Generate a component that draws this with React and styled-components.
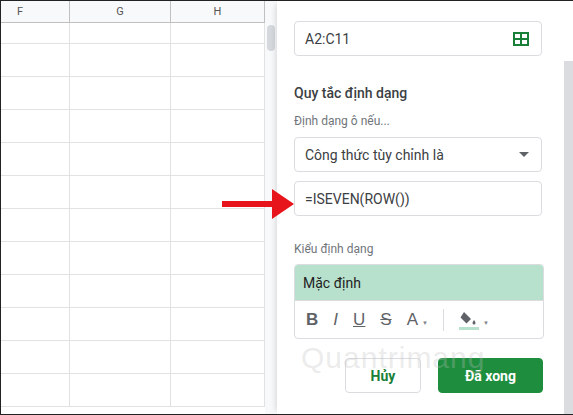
import React from 'react';
import styled, { createGlobalStyle } from 'styled-components';

const Global = createGlobalStyle`
  body { margin: 0; font-family: Roboto, "Liberation Sans", sans-serif; }
`;

const Frame = styled.div`
  width: 573px;
  height: 415px;
  box-sizing: border-box;
  border: 1px solid #222;
  border-right: none;
  display: flex;
  position: relative;
  overflow: hidden;
  background: #fff;
`;

const Sheet = styled.div`
  width: 264px;
  flex: none;
  display: flex;
  flex-direction: column;
`;

const Row = styled.div`
  display: grid;
  grid-template-columns: 69px 101px 94px;
  height: ${p => p.h}px;
  flex: none;
  background: ${p => (p.head ? '#f8f9fa' : '#fff')};
  border-bottom: 1px solid ${p => (p.head ? '#c0c0c0' : '#e2e2e2')};
  box-sizing: border-box;
`;

const Cell = styled.div`
  border-right: 1px solid ${p => (p.head ? '#c0c0c0' : '#e2e2e2')};
  font-size: 11px;
  color: #555;
  display: flex;
  align-items: center;
  justify-content: ${p => (p.left ? 'flex-start' : 'center')};
  padding-left: ${p => (p.left ? '16px' : '0')};
`;

const VScroll = styled.div`
  width: 12px;
  flex: none;
  background: #f8f9fa;
  padding: 24px 2px 0;
  box-sizing: border-box;
`;

const Thumb = styled.div`
  height: 26px;
  border-radius: 5px;
  background: #d5d8dc;
`;

const Panel = styled.div`
  flex: 1;
  padding: 20px 0 0 17px;
  display: flex;
  flex-direction: column;
  box-shadow: -4px 0 6px -3px rgba(0,0,0,0.15);
  position: relative;
`;

const PanelScroll = styled.div`
  position: absolute;
  right: 0;
  top: 60px;
  bottom: 0;
  width: 9px;
  background: #dadce0;
`;

const Field = styled.div`
  width: 248px;
  height: 35px;
  box-sizing: border-box;
  border: 1px solid #dadce0;
  border-radius: 4px;
  display: flex;
  align-items: center;
  justify-content: space-between;
  padding: 0 12px 0 10px;
  font-size: 14px;
  color: #3c4043;
  margin-bottom: ${p => p.mb || 0}px;
`;

const Title = styled.div`
  font-size: 14px;
  font-weight: 500;
  color: #3c4043;
  margin: 29px 0 13px;
`;

const Label = styled.div`
  font-size: 12px;
  color: #70757a;
  margin-top: ${p => p.mt || 0}px;
  margin-bottom: ${p => p.mb}px;
`;

const StyleBox = styled.div`
  width: 248px;
  border: 1px solid #dadce0;
  border-radius: 4px;
  overflow: hidden;
`;

const Preview = styled.div`
  height: 35px;
  background: #b7e1cd;
  display: flex;
  align-items: center;
  padding-left: 8px;
  font-size: 14px;
  color: #222;
  border-bottom: 1px solid #dadce0;
`;

const Tools = styled.div`
  height: 37px;
  display: flex;
  align-items: center;
  padding-left: 11px;
  gap: 15px;
  color: #5f6368;
  font-size: 17px;
`;

const Tool = styled.span`
  font-weight: ${p => (p.b ? 700 : 500)};
  font-style: ${p => (p.i ? 'italic' : 'normal')};
  text-decoration: ${p => p.deco || 'none'};
  font-family: "Liberation Sans", sans-serif;
  display: flex;
  align-items: center;
  gap: 4px;
`;

const Caret = styled.span`
  font-size: 6px;
  color: #80868b;
  margin-top: 6px;
`;

const Sep = styled.div`
  width: 1px;
  height: 22px;
  background: #dadce0;
`;

const Buttons = styled.div`
  display: flex;
  gap: 17px;
  margin: 19px 0 0 51px;
`;

const Btn = styled.div`
  width: ${p => p.w}px;
  height: 35px;
  box-sizing: border-box;
  border-radius: 4px;
  display: flex;
  align-items: center;
  justify-content: center;
  font-size: 14px;
  font-weight: 700;
  color: ${p => (p.primary ? '#fff' : '#188038')};
  background: ${p => (p.primary ? '#1e8e3e' : '#fff')};
  border: 1px solid ${p => (p.primary ? '#1e8e3e' : '#dadce0')};
`;

const Arrow = styled.svg`
  position: absolute;
  left: 221px;
  top: 186px;
`;

const Watermark = styled.div`
  position: absolute;
  left: 300px;
  top: 340px;
  font-size: 30px;
  color: rgba(190,190,190,0.3);
  font-family: "Liberation Sans", sans-serif;
  letter-spacing: 1px;
  pointer-events: none;
`;

const rows = [21, 33, 33, 33, 33, 33, 33, 33, 33, 33, 33, 33];

export default function App() {
  return (
    <>
      <Global />
      <Frame>
        <Sheet>
          <Row head h={22}>
            <Cell head left>F</Cell>
            <Cell head>G</Cell>
            <Cell head>H</Cell>
          </Row>
          {rows.map((h, i) => (
            <Row key={i} h={h}>
              <Cell /><Cell /><Cell />
            </Row>
          ))}
        </Sheet>
        <VScroll><Thumb /></VScroll>
        <Panel>
          <Field>
            A2:C11
            <svg width="16" height="14" viewBox="0 0 16 14">
              <rect x="1" y="1" width="14" height="12" fill="none" stroke="#188038" strokeWidth="2" />
              <path d="M8 1v12M1 7h14" stroke="#188038" strokeWidth="2" />
            </svg>
          </Field>
          <Title>Quy tắc định dạng</Title>
          <Label mb={9}>Định dạng ô nếu...</Label>
          <Field mb={9}>
            Công thức tùy chỉnh là
            <svg width="10" height="5" viewBox="0 0 10 5"><path d="M0 0h10L5 5z" fill="#5f6368" /></svg>
          </Field>
          <Field>=ISEVEN(ROW())</Field>
          <Label mt={26} mb={8}>Kiểu định dạng</Label>
          <StyleBox>
            <Preview>Mặc định</Preview>
            <Tools>
              <Tool b>B</Tool>
              <Tool i>I</Tool>
              <Tool deco="underline">U</Tool>
              <Tool deco="line-through">S</Tool>
              <Tool>A<Caret>▼</Caret></Tool>
              <Sep />
              <Tool>
                <svg width="20" height="20" viewBox="0 0 20 20">
                  <path d="M5 2l7 7-4.5 4.5-6-6z" fill="#5f6368" />
                  <path d="M15 10c1 1.5 1.5 2.3 1.5 3a1.5 1.5 0 0 1-3 0c0-.7.5-1.5 1.5-3z" fill="#5f6368" />
                  <rect x="0" y="17" width="20" height="3" fill="#b7e1cd" />
                </svg>
                <Caret>▼</Caret>
              </Tool>
            </Tools>
          </StyleBox>
          <Buttons>
            <Btn w={76}>Hủy</Btn>
            <Btn w={105} primary>Đã xong</Btn>
          </Buttons>
          <PanelScroll />
        </Panel>
        <Watermark>Quantrimang</Watermark>
        <Arrow width="72" height="34" viewBox="0 0 72 34">
          <path d="M0 14h50V2l22 15-22 15V20H0z" fill="#e8141b" />
        </Arrow>
      </Frame>
    </>
  );
}
